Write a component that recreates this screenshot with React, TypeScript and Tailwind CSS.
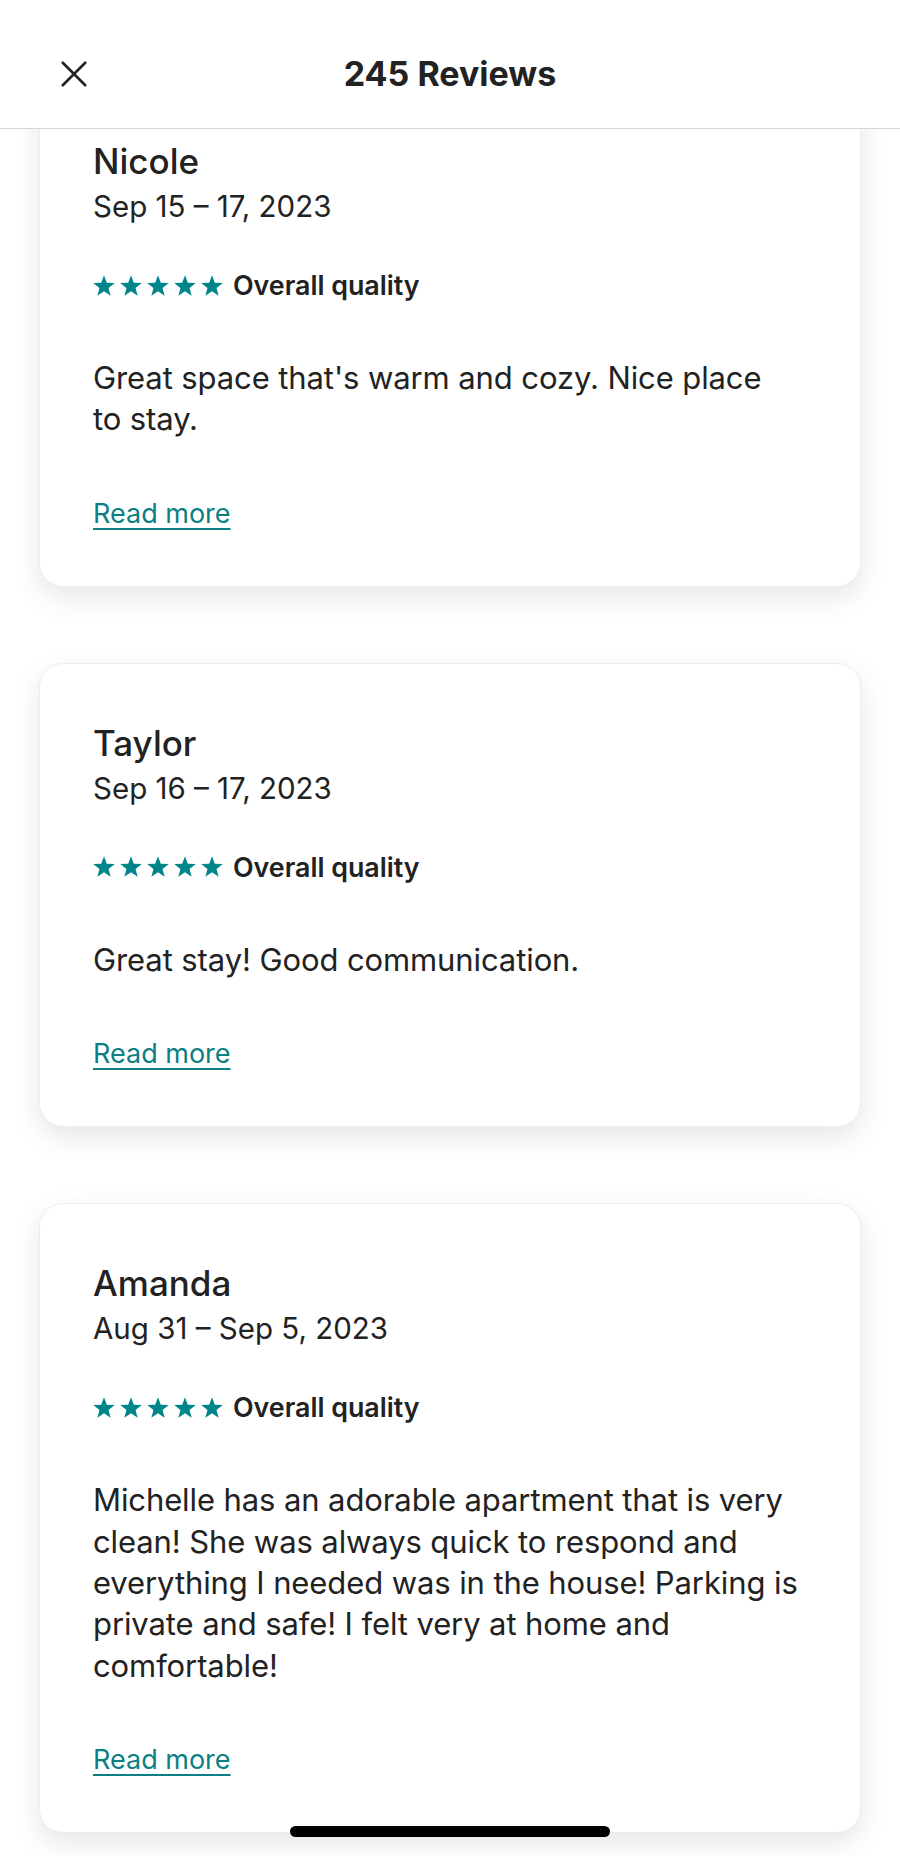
import React from 'react';

type Review = {
  name: string;
  dates: string;
  lines: string[];
};

// lines kept as they break in the app
const reviews: Review[] = [
  {
    name: 'Nicole',
    dates: 'Sep 15 – 17, 2023',
    lines: ["Great space that's warm and cozy. Nice place", 'to stay.'],
  },
  {
    name: 'Taylor',
    dates: 'Sep 16 – 17, 2023',
    lines: ['Great stay! Good communication.'],
  },
  {
    name: 'Amanda',
    dates: 'Aug 31 – Sep 5, 2023',
    lines: [
      'Michelle has an adorable apartment that is very',
      'clean! She was always quick to respond and',
      'everything I needed was in the house! Parking is',
      'private and safe! I felt very at home and',
      'comfortable!',
    ],
  },
];

const Star: React.FC = () => (
  <svg viewBox="0 0 24 23" className="h-[21px] w-[22px]" fill="#00858a">
    <path d="M12 0.2L15.06 8.39L23.79 8.77L16.95 14.21L19.29 22.63L12 17.8L4.71 22.63L7.05 14.21L0.21 8.77L8.94 8.39Z" />
  </svg>
);

const ReviewCard: React.FC<{ review: Review }> = ({ review }) => (
  <div className="bg-white rounded-[24px] border border-[#ededed] shadow-[0_10px_28px_rgba(0,0,0,0.10)] px-[53px] pt-[58px] pb-[54px]">
    <h2 className="text-[35px] leading-[42px] font-medium">{review.name}</h2>
    <div className="mt-[4px] text-[29.5px] leading-[40px]">{review.dates}</div>
    <div className="mt-[44px] flex items-center h-[30px]">
      <div className="flex gap-[5px]">
        {[0, 1, 2, 3, 4].map((i) => (
          <Star key={i} />
        ))}
      </div>
      <span className="ml-[10px] text-[26.8px] leading-[30px] font-semibold">Overall quality</span>
    </div>
    <p className="mt-[57px] text-[31px] leading-[41.4px] tracking-[-0.1px]">
      {review.lines.map((l, i) => (
        <span key={i} className="block whitespace-nowrap">
          {l}
        </span>
      ))}
    </p>
    <a href="#" className="mt-[56px] inline-block text-[27px] leading-[36px] text-[#0b7f83] underline decoration-2 underline-offset-[5px]">
      Read more
    </a>
  </div>
);

export default function App() {
  return (
    <div className="relative min-h-screen bg-white text-[#222222]" style={{ fontFamily: 'Inter, "Noto Sans", sans-serif' }}>
      {/* header sits over the scrolled list */}
      <header className="absolute top-0 inset-x-0 z-10 h-[129px] pt-[20px] bg-white border-b border-[#d6d6d6] grid grid-cols-[1fr_auto_1fr] items-center px-[56px]">
        <button className="w-[36px] h-[36px] flex items-center justify-center">
          <svg viewBox="0 0 32 32" className="w-[30px] h-[30px]" fill="none" stroke="#222222" strokeWidth="2.8" strokeLinecap="round">
            <path d="M4 4l24 24M28 4L4 28" />
          </svg>
        </button>
        <h1 className="text-[34px] leading-[40px] font-bold">245 Reviews</h1>
        <div />
      </header>

      <main className="px-[39px] pt-[81px] pb-[24px] flex flex-col gap-[76px]">
        {reviews.map((r) => (
          <ReviewCard key={r.name} review={r} />
        ))}
      </main>

      <div className="fixed bottom-[19px] left-1/2 -translate-x-1/2 w-[320px] h-[11px] rounded-full bg-black z-20" />
    </div>
  );
}
